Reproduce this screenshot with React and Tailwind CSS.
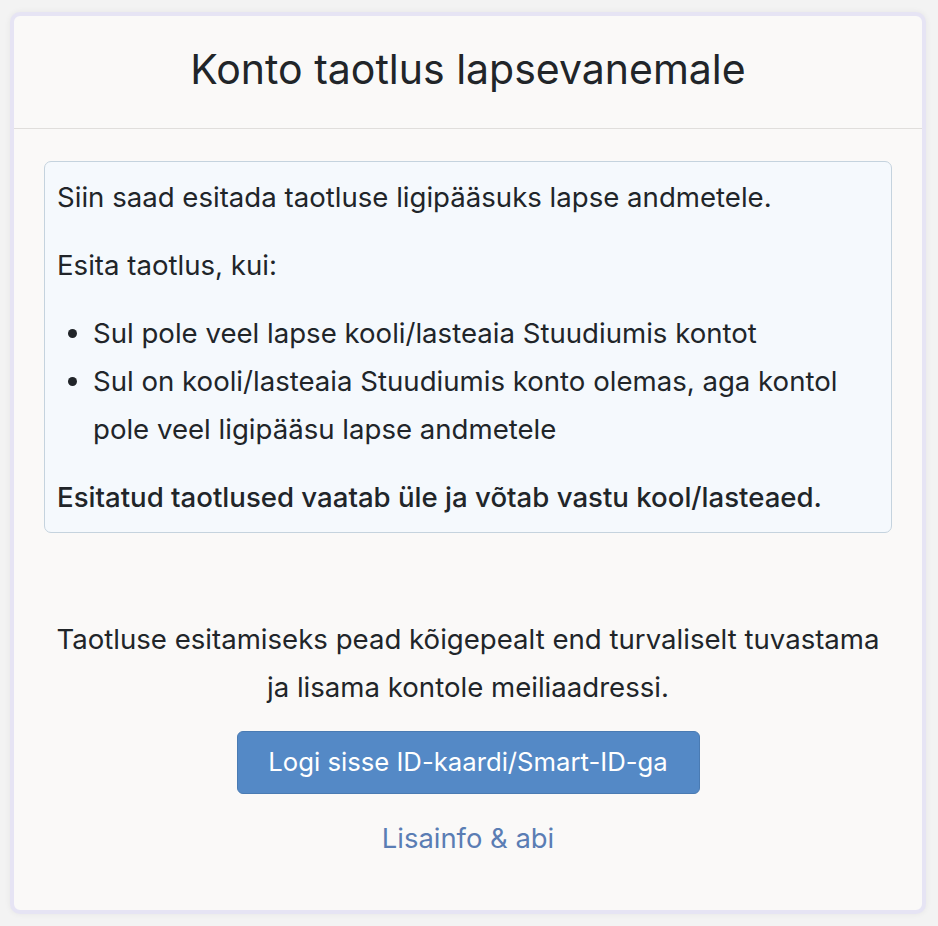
export default function App() {
  return (
    <div
      className="min-h-screen bg-[#f3f3f3] pt-[12px] pl-[10px]"
      style={{ fontFamily: "Inter, 'Noto Sans', sans-serif" }}
    >
      <div className="w-[916px] h-[902px] rounded-[10px] border-[4px] border-[#e6e4f4] bg-[#faf9f8] shadow-[0_0_6px_rgba(0,0,0,0.06)]">
        {/* Päis */}
        <div className="h-[113px] border-b border-[#e0dedc] flex items-center justify-center pb-[5px]">
          <h1 className="text-[41px] text-[#212529]">Konto taotlus lapsevanemale</h1>
        </div>

        <div className="px-[30px] pt-[32px]">
          {/* Infokast */}
          <div className="rounded-[7px] border border-[#c5d3de] bg-[#f5f9fd] px-[12px] py-[11px] text-[27.6px] leading-[48px] text-[#212529]">
            <p>Siin saad esitada taotluse ligipääsuks lapse andmetele.</p>
            <p className="mt-[20px]">Esita taotlus, kui:</p>
            <ul className="mt-[20px] list-disc pl-[36px]">
              <li>Sul pole veel lapse kooli/lasteaia Stuudiumis kontot</li>
              <li>Sul on kooli/lasteaia Stuudiumis konto olemas, aga kontol pole veel ligipääsu lapse andmetele</li>
            </ul>
            <p className="mt-[20px] font-medium">Esitatud taotlused vaatab üle ja võtab vastu kool/lasteaed.</p>
          </div>

          {/* Sisselogimine */}
          <div className="mt-[82px] flex flex-col items-center text-center">
            <p className="text-[27.6px] leading-[48px] text-[#212529]">
              Taotluse esitamiseks pead kõigepealt end turvaliselt tuvastama
              <br />
              ja lisama kontole meiliaadressi.
            </p>
            <button className="mt-[20px] w-[463px] h-[63px] rounded-[6px] border border-[#4a7bb3] bg-[#5489c6] text-white text-[25.7px]">
              Logi sisse ID-kaardi/Smart-ID-ga
            </button>
            <a href="#" className="mt-[20px] text-[27.4px] leading-[48px] text-[#5a7db4]">
              Lisainfo &amp; abi
            </a>
          </div>
        </div>
      </div>
    </div>
  );
}
